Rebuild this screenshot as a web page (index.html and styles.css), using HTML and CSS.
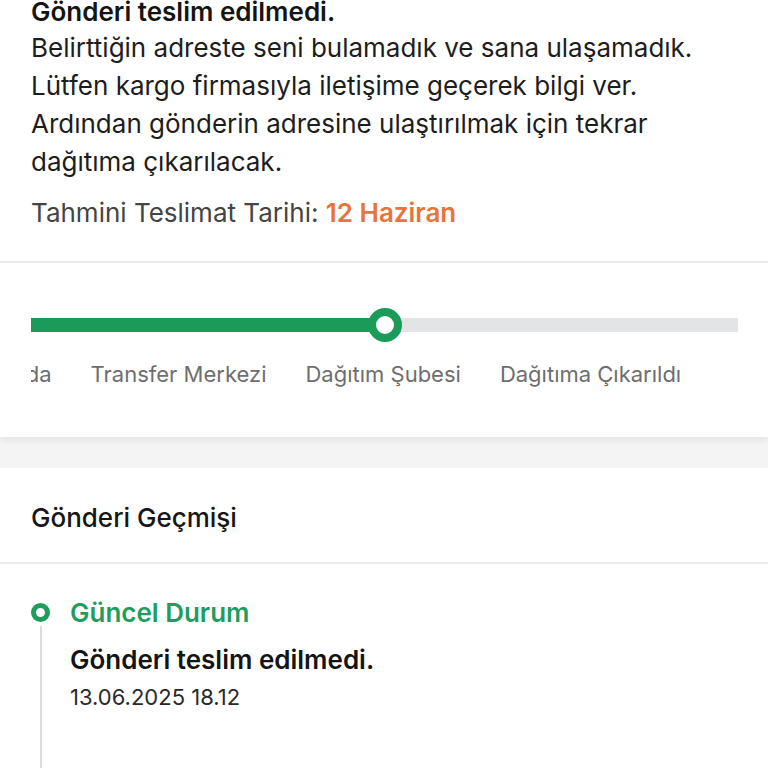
FILE: index.html
```html
<!DOCTYPE html>
<html lang="tr">
<head>
<meta charset="utf-8">
<link rel="stylesheet" href="styles.css">
</head>
<body>
<div class="page">
  <section class="card info">
    <h1 class="info-title">Gönderi teslim edilmedi.</h1>
    <p class="info-text">Belirttiğin adreste seni bulamadık ve sana ulaşamadık.<br>Lütfen kargo firmasıyla iletişime geçerek bilgi ver.<br>Ardından gönderin adresine ulaştırılmak için tekrar<br>dağıtıma çıkarılacak.</p>
    <p class="eta">Tahmini Teslimat Tarihi: <span class="eta-date">12 Haziran</span></p>
  </section>
  <section class="card progress">
    <div class="track">
      <div class="track-fill" style="width: 354px"></div>
      <div class="track-knob"></div>
    </div>
    <div class="steps-clip">
      <div class="steps">
        <span class="step">Yolda</span>
        <span class="step">Transfer Merkezi</span>
        <span class="step">Dağıtım Şubesi</span>
        <span class="step">Dağıtıma Çıkarıldı</span>
      </div>
    </div>
  </section>
  <div class="band"></div>
  <section class="card history">
    <h2 class="history-title">Gönderi Geçmişi</h2>
    <div class="timeline">
      <div class="tl-item">
        <div class="tl-rail">
          <span class="tl-dot"></span>
          <span class="tl-line"></span>
        </div>
        <div class="tl-body">
          <div class="tl-status">Güncel Durum</div>
          <div class="tl-event">Gönderi teslim edilmedi.</div>
          <div class="tl-date">13.06.2025 18.12</div>
        </div>
      </div>
    </div>
  </section>
</div>
</body>
</html>
```

FILE: styles.css
```css
* { box-sizing: border-box; }
html, body {
  margin: 0;
  padding: 0;
  background: #ffffff;
  font-family: "Inter", "Noto Sans", sans-serif;
  color: #1d1d1d;
  overflow: hidden;
}
.page {
  width: 768px;
  height: 768px;
  overflow: hidden;
}
.card { background: #fff; }

.info {
  padding: 0 31px 29px;
  border-bottom: 2px solid #ebebeb;
}
.info-title {
  margin: 0;
  font-size: 26px;
  line-height: 24px;
  font-weight: 600;
  color: #141414;
}
.info-text {
  margin: 5px 0 0;
  font-size: 26px;
  line-height: 38px;
  font-weight: 400;
  color: #1d1d1d;
  white-space: nowrap;
}
.eta {
  margin: 13px 0 0;
  font-size: 26px;
  line-height: 38px;
  color: #444;
}
.eta-date {
  color: #e8743b;
  font-weight: 600;
}

.progress {
  padding: 55px 30px 0 31px;
  height: 174px;
  box-shadow: 0 4px 6px rgba(0,0,0,0.06);
  position: relative;
  z-index: 1;
}
.track {
  position: relative;
  height: 14px;
  background: #e3e4e6;
}
.track-fill {
  height: 100%;
  background: #1a9b58;
}
.track-knob {
  position: absolute;
  left: 337px;
  top: -10px;
  width: 34px;
  height: 34px;
  border-radius: 50%;
  border: 8px solid #1a9b58;
  background: #fff;
}
.steps-clip {
  overflow: hidden;
  margin-top: 27px;
}
.steps {
  display: flex;
  gap: 39px;
  white-space: nowrap;
  margin-left: -37px;
  font-size: 22px;
  line-height: 30px;
  color: #6e6e6e;
}

.band {
  height: 31px;
  background: #f4f4f5;
}

.history-title {
  margin: 0;
  padding: 34px 31px 0;
  height: 96px;
  font-size: 26px;
  line-height: 32px;
  font-weight: 500;
  color: #161616;
  border-bottom: 2px solid #ebebeb;
}
.timeline {
  padding: 34px 31px 0;
}
.tl-item {
  display: flex;
  gap: 20px;
}
.tl-rail {
  width: 19px;
  display: flex;
  flex-direction: column;
  align-items: center;
}
.tl-dot {
  margin-top: 5px;
  width: 19px;
  height: 19px;
  border-radius: 50%;
  border: 5px solid #1f9d5c;
  background: #fff;
}
.tl-line {
  width: 2px;
  height: 200px;
  margin-top: 4px;
  background: #dcdcdc;
}
.tl-status {
  font-size: 26px;
  line-height: 30px;
  font-weight: 600;
  color: #1f9d5c;
}
.tl-event {
  margin-top: 17px;
  font-size: 26px;
  line-height: 30px;
  font-weight: 600;
  color: #141414;
}
.tl-date {
  margin-top: 7px;
  font-size: 22px;
  line-height: 30px;
  color: #2a2a2a;
}
```
